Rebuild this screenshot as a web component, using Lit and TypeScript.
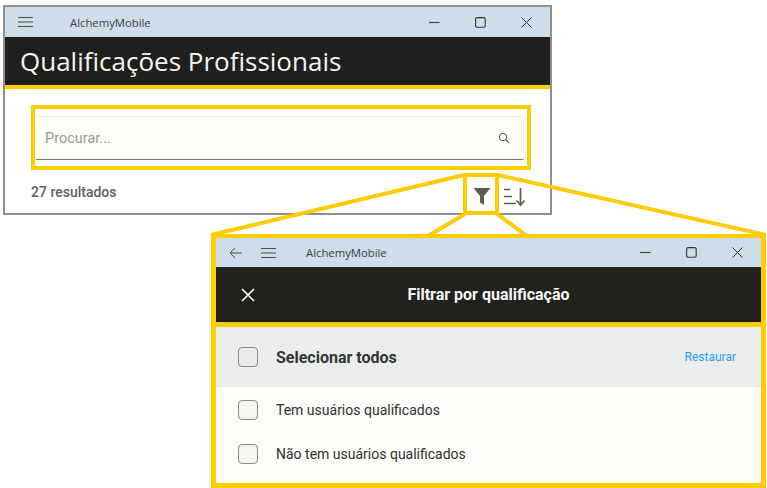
import { LitElement, css, html, svg } from 'lit'
import { customElement } from 'lit/decorators.js'

const menuIcon = html`<svg class="ico" width="16" height="12" viewBox="0 0 16 12"><path d="M0 1.5h15M0 6h15M0 10.5h15" stroke="#4a4f52" stroke-width="1.1" fill="none"/></svg>`
const backIcon = html`<svg class="ico" width="14" height="12" viewBox="0 0 14 12"><path d="M13 6H1.2M6 1 1 6l5 5" stroke="#4a4f52" stroke-width="1" fill="none"/></svg>`

const winButtons = html`
  <div class="win-buttons">
    <svg width="11" height="11" viewBox="0 0 11 11"><path d="M0 5.5h10.5" stroke="#444" stroke-width="1.2"/></svg>
    <svg width="11" height="11" viewBox="0 0 11 11"><rect x=".6" y=".6" width="9.6" height="9.6" rx="1.5" fill="none" stroke="#333" stroke-width="1.1"/></svg>
    <svg width="11" height="11" viewBox="0 0 11 11"><path d="M.5.5l10 10M10.5.5l-10 10" stroke="#333" stroke-width="1" fill="none"/></svg>
  </div>`

@customElement('app-root')
export class AppRoot extends LitElement {
  static styles = css`
    :host {
      display: block;
      position: relative;
      width: 767px;
      height: 488px;
      overflow: hidden;
      background: #fff;
      font-family: Roboto, sans-serif;
    }

    .window {
      position: absolute;
      box-sizing: border-box;
      display: flex;
      flex-direction: column;
      background: #fffffe;
    }
    .main {
      left: 3px;
      top: 5px;
      width: 549px;
      height: 210px;
      border: 2px solid #8f8f8f;
      border-bottom-width: 2px;
      border-top-width: 2px;
    }
    .filter {
      left: 211px;
      top: 234px;
      width: 555px;
      height: 254px;
      border: 5px solid #ffcc00;
      border-top-width: 4px;
      background: #fdfdf9;
    }

    .titlebar {
      display: flex;
      align-items: center;
      background: #cddde9;
      height: 30px;
      flex: none;
      padding-left: 13px;
      color: #3b4045;
      font-family: 'Open Sans', sans-serif;
      font-size: 11.3px;
    }
    .ico { flex: none; display: block; }
    .main .app-name { margin-left: 36px; }
    .filter .titlebar { height: 29px; padding-left: 13px; }
    .filter .titlebar .ico + .ico { margin-left: 18px; }
    .filter .app-name { margin-left: 29px; }
    .win-buttons {
      margin-left: auto;
      display: flex;
      align-items: center;
      gap: 35px;
      padding-right: 18px;
    }
    .filter .win-buttons { gap: 35px; padding-right: 18px; }

    .heading {
      background: #1f1f1d;
      color: #f4f4f2;
      height: 48px;
      flex: none;
      display: flex;
      align-items: center;
      padding-left: 15px;
      border-bottom: 4px solid #ffcc00;
      font-family: 'Open Sans', sans-serif;
      font-size: 26px;
      font-weight: 500;
    }

    .body {
      flex: 1;
      display: flex;
      flex-direction: column;
      padding: 16px 19px 0 26px;
    }
    .search-frame {
      border: 4px solid #ffcc00;
      height: 65px;
      box-sizing: border-box;
      padding: 7px 3px 6px 1px;
      display: flex;
    }
    .search {
      flex: 1;
      box-sizing: border-box;
      display: flex;
      align-items: center;
      justify-content: space-between;
      border-top: 1px solid #efefeb;
      border-right: 1px solid #efefeb;
      border-bottom: 1px solid #77787a;
      background: #fdfdf9;
      padding: 0 13px 0 9px;
      color: #9a9a9a;
      font-size: 14.5px;
    }
    .results {
      margin-top: auto;
      display: flex;
      align-items: center;
      height: 44px;
      color: #5f5f5d;
      font-size: 14px;
      font-weight: 500;
    }
    .results svg { position: absolute; }

    .filter-head {
      background: #21211e;
      color: #f7f7f5;
      height: 55px;
      flex: none;
      display: flex;
      align-items: center;
      justify-content: center;
      position: relative;
      font-size: 16px;
      font-weight: 700;
      border-bottom: 1px solid #111;
      box-sizing: border-box;
    }
    .filter-head svg { position: absolute; left: 25px; top: 21px; }
    .divider { height: 5px; background: #ffcc00; flex: none; }

    .row {
      display: flex;
      align-items: center;
      gap: 18px;
      padding: 0 25px 0 22px;
      color: #2f2f2f;
      font-size: 14px;
      height: 44px;
    }
    .row.all {
      height: 60px;
      background: #ebeded;
      font-size: 16px;
      font-weight: 700;
      color: #343434;
    }
    .list { padding-top: 1px; }
    .box {
      width: 18px;
      height: 18px;
      border: 1px solid #8a8a88;
      border-radius: 4px;
      background: #f5f5f2;
      flex: none;
    }
    .row.all .box { background: #e9ebeb; }
    .restore {
      margin-left: auto;
      color: #2a9df0;
      font-size: 12px;
      font-weight: 400;
    }

    .overlay {
      position: absolute;
      left: 0;
      top: 0;
      pointer-events: none;
    }
  `

  render() {
    return html`
      <div class="window main">
        <div class="titlebar">
          ${menuIcon}
          <span class="app-name">AlchemyMobile</span>
          ${winButtons}
        </div>
        <div class="heading">Qualificações Profissionais</div>
        <div class="body">
          <div class="search-frame">
            <div class="search">
              <span>Procurar...</span>
              <svg width="12" height="12" viewBox="0 0 12 12"><circle cx="5" cy="5" r="3.7" fill="none" stroke="#55554f" stroke-width="1"/><path d="M7.8 7.8l3.4 3.4" stroke="#55554f" stroke-width="1.1"/></svg>
            </div>
          </div>
          <div class="results">27 resultados</div>
        </div>
      </div>

      <div class="window filter">
        <div class="titlebar">
          ${backIcon}
          ${menuIcon}
          <span class="app-name">AlchemyMobile</span>
          ${winButtons}
        </div>
        <div class="filter-head">
          <svg width="14" height="14" viewBox="0 0 14 14"><path d="M1 1l12 12M13 1 1 13" stroke="#f7f7f5" stroke-width="1.7" fill="none"/></svg>
          Filtrar por qualificação
        </div>
        <div class="divider"></div>
        <div class="row all">
          <span class="box"></span>
          <span>Selecionar todos</span>
          <span class="restore">Restaurar</span>
        </div>
        <div class="list">
          <div class="row"><span class="box"></span><span>Tem usuários qualificados</span></div>
          <div class="row"><span class="box"></span><span>Não tem usuários qualificados</span></div>
        </div>
      </div>

      <svg class="overlay" width="767" height="488" viewBox="0 0 767 488">
        ${svg`
          <rect x="465" y="175" width="32" height="38" fill="#fff" stroke="#ffcc00" stroke-width="4"/>
          <path d="M473.500 188h17l-6.500 8v9l-4-2.500v-6.500z" fill="#5c5c56"/>
          <path d="M504 189.500h6M504 196.500h8M504 203.500h12" stroke="#5c5c56" stroke-width="1.700" fill="none"/>
          <path d="M520.500 188v16M516.500 200.500l4 4.500 4-4.500" stroke="#5c5c56" stroke-width="1.700" fill="none"/>
          <path d="M464 175 211 235M498 175 766 235M465 214l-37 22M497 214l30 22" stroke="#ffcc00" stroke-width="4" fill="none"/>
        `}
      </svg>
    `
  }
}
